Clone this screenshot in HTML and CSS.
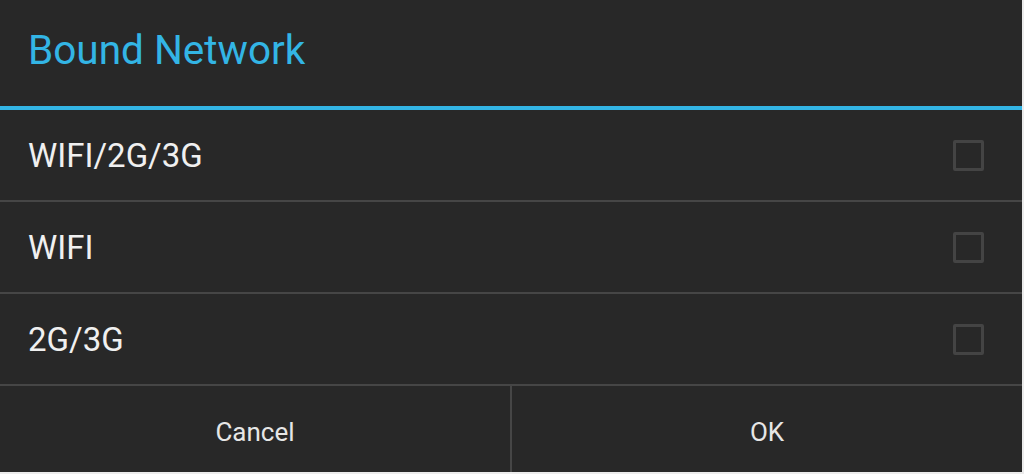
FILE: index.html
```html
<!DOCTYPE html>
<html>
<head>
<meta charset="utf-8">
<link rel="stylesheet" href="styles.css">
</head>
<body>
<div class="dialog">
  <div class="header"><span class="title">Bound Network</span></div>
  <div class="list">
    <div class="row"><span class="label">WIFI/2G/3G</span><span class="check"></span></div>
    <div class="row"><span class="label">WIFI</span><span class="check"></span></div>
    <div class="row"><span class="label">2G/3G</span><span class="check"></span></div>
  </div>
  <div class="buttons">
    <div class="btn">Cancel</div>
    <div class="btn">OK</div>
  </div>
</div>
</body>
</html>
```
FILE: styles.css
```css
html, body {
  margin: 0;
  padding: 0;
}
body {
  background: #ececec;
  width: 1024px;
  height: 474px;
  overflow: hidden;
  font-family: Roboto, "Liberation Sans", sans-serif;
}
.dialog {
  width: 1022px;
  height: 472px;
  background: #282828;
  display: flex;
  flex-direction: column;
}
.header {
  height: 99px;
  border-bottom: 4px solid #33b5e5;
  display: flex;
  align-items: center;
  padding-left: 28px;
  padding-bottom: 7px;
}
.title {
  color: #33b5e5;
  font-size: 40.5px;
}
.row {
  height: 90px;
  border-bottom: 2px solid #464646;
  display: flex;
  align-items: center;
  justify-content: space-between;
  padding: 0 38px 0 28px;
}
.label {
  color: #f0f0f0;
  font-size: 33px;
}
.check {
  width: 25px;
  height: 25px;
  border: 3px solid #444;
  border-radius: 2px;
}
.buttons {
  flex: 1;
  display: flex;
}
.btn {
  flex: 1;
  display: flex;
  align-items: center;
  justify-content: center;
  color: #e6e6e6;
  font-size: 26px;
  padding-top: 6px;
}
.btn + .btn {
  border-left: 2px solid #464646;
}
```
